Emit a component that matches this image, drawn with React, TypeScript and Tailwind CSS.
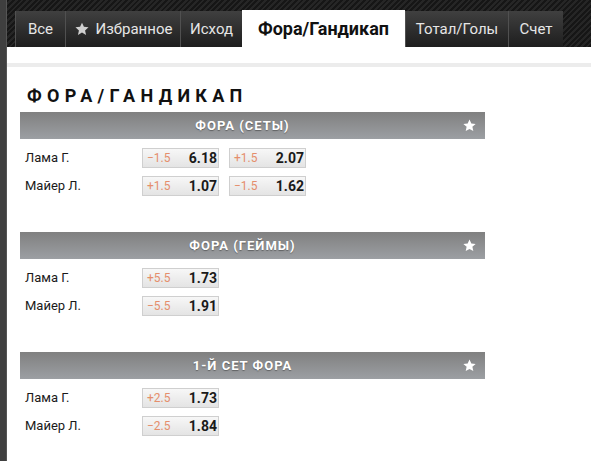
import React from "react";

const Star = ({ className = "" }: { className?: string }) => (
  <svg viewBox="0 0 24 24" className={className} fill="currentColor">
    <path d="M12 2.5l2.9 6.3 6.9.7-5.2 4.6 1.5 6.8L12 17.4l-6.1 3.5 1.5-6.8-5.2-4.6 6.9-.7z" />
  </svg>
);

type Odd = { h: string; v: string };
type Row = { name: string; odds: Odd[] };
type Section = { title: string; rows: Row[] };

const sections: Section[] = [
  {
    title: "ФОРА (СЕТЫ)",
    rows: [
      { name: "Лама Г.", odds: [{ h: "−1.5", v: "6.18" }, { h: "+1.5", v: "2.07" }] },
      { name: "Майер Л.", odds: [{ h: "+1.5", v: "1.07" }, { h: "−1.5", v: "1.62" }] },
    ],
  },
  {
    title: "ФОРА (ГЕЙМЫ)",
    rows: [
      { name: "Лама Г.", odds: [{ h: "+5.5", v: "1.73" }] },
      { name: "Майер Л.", odds: [{ h: "−5.5", v: "1.91" }] },
    ],
  },
  {
    title: "1-Й СЕТ ФОРА",
    rows: [
      { name: "Лама Г.", odds: [{ h: "+2.5", v: "1.73" }] },
      { name: "Майер Л.", odds: [{ h: "−2.5", v: "1.84" }] },
    ],
  },
];

const tabs = [
  { label: "Все", w: "w-[50px]" },
  { label: "Избранное", w: "w-[115px]", star: true },
  { label: "Исход", w: "w-[62px]" },
  { label: "Фора/Гандикап", w: "w-[163px]", active: true },
  { label: "Тотал/Голы", w: "w-[103px]" },
  { label: "Счет", w: "w-[55px]" },
];

export default function App() {
  return (
    <div
      className="flex h-[461px] w-[591px] overflow-hidden bg-white"
      style={{ fontFamily: "Roboto, 'Noto Sans', sans-serif" }}
    >
      <div className="w-[7px] shrink-0 bg-[#3f3f3f] border-r border-[#555]" />
      <div className="flex min-h-0 flex-1 flex-col">
        <div className="flex h-[47px] shrink-0 items-end bg-[repeating-linear-gradient(135deg,#161616_0px,#161616_2px,#262626_2px,#262626_4px)] pl-[8px]">
          {tabs.map((t) =>
            t.active ? (
              <div
                key={t.label}
                className={`${t.w} flex h-[37px] items-center justify-center bg-white text-[18px] font-bold text-[#111]`}
              >
                {t.label}
              </div>
            ) : (
              <div
                key={t.label}
                className={`${t.w} flex h-[36px] items-center justify-center gap-[6px] border-l border-[#505050] bg-gradient-to-b from-[#404040] to-[#1e1e1e] text-[15px] text-[#e6e6e6]`}
              >
                {t.star && <Star className="h-[16px] w-[16px] text-[#cfcfcf]" />}
                {t.label}
              </div>
            )
          )}
        </div>
        <div className="mt-[16px] h-[4px] shrink-0 bg-[#ececec]" />
        <div className="shrink-0 pl-[13px] pt-[18px]">
          <div className="mb-[6px] pl-[7px] text-[18px] font-bold leading-[21px] tracking-[5.3px] text-[#111]">
            ФОРА/ГАНДИКАП
          </div>
          {sections.map((s) => (
            <div key={s.title} className="mb-[36px] w-[465px]">
              <div className="relative flex h-[27px] items-center justify-center bg-gradient-to-b from-[#808080] to-[#9c9fa3] pr-[20px]">
                <span className="text-[13px] font-bold tracking-[1px] text-white [text-shadow:0_1px_1px_rgba(0,0,0,0.35)]">
                  {s.title}
                </span>
                <Star className="absolute right-[8px] top-[6px] h-[15px] w-[15px] text-white" />
              </div>
              <div className="flex flex-col gap-[8px] pt-[9px]">
                {s.rows.map((r) => (
                  <div key={r.name} className="flex h-[20px] items-center">
                    <div className="w-[122px] pl-[5px] text-[13px] text-[#1a1a1a]">{r.name}</div>
                    <div className="flex gap-[10px]">
                      {r.odds.map((o, i) => (
                        <div
                          key={i}
                          className="flex h-[20px] w-[77px] items-center justify-between border border-[#cfcfcf] bg-gradient-to-b from-[#f7f7f7] to-[#e4e4e4] pl-[4px] pr-[1px]"
                        >
                          <span className="text-[12px] text-[#e58e6c]">{o.h}</span>
                          <span className="text-[14px] font-bold text-[#1a1a1a]">{o.v}</span>
                        </div>
                      ))}
                    </div>
                  </div>
                ))}
              </div>
            </div>
          ))}
        </div>
      </div>
    </div>
  );
}
